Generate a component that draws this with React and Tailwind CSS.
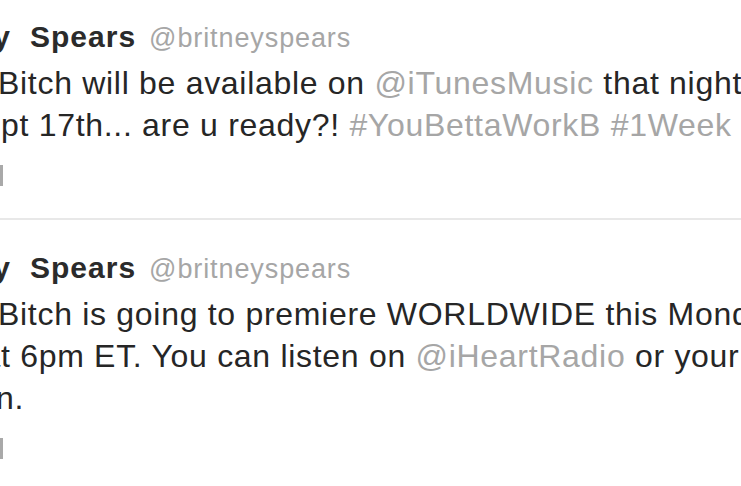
import React from "react";

const LINK = "text-[#a6a6a6]";

// a run of text that starts left of the crop; `pre` overflows to the left of the visible part
const Line = ({ pre, className = "", children }) => (
  <div className={`flex whitespace-nowrap ${className}`}>
    <span className="flex w-0 shrink-0 justify-end">
      <span>{pre}</span>
    </span>
    <span>{children}</span>
  </div>
);

const Header = () => (
  <div className="flex items-baseline whitespace-nowrap leading-[40px] pl-[11px]">
    <span className="flex w-0 shrink-0 justify-end text-[30px] font-bold tracking-[1px] text-[#2b2b2b]">
      <span>Britney</span>
    </span>
    <span className="ml-[19px] text-[30px] font-bold tracking-[1px] text-[#2b2b2b]">
      Spears
    </span>
    <span className={`ml-[13px] text-[27px] tracking-[0.9px] ${LINK}`}>
      @britneyspears
    </span>
  </div>
);

const Tweet = ({ lines, className }) => (
  <div className={className}>
    <Header />
    <div className="mt-[4px] text-[32px] leading-[42px] tracking-[0.7px] text-[#262626]">
      {lines}
    </div>
    <div className="mt-[19px] h-[21px] w-[3px] bg-[#a9a9a9]" />
  </div>
);

export default function App() {
  return (
    <div className="h-[486px] w-[741px] overflow-hidden bg-white font-['Liberation_Sans',Arial,sans-serif]">
      <Tweet
        className="pt-[17px] pb-[32px] border-b-2 border-[#e8e8e8]"
        lines={
          <>
            <Line pre="Work " className="-ml-[2px]">
              Bitch will be available on <span className={LINK}>@iTunesMusic</span> that night,
            </Line>
            <Line pre="Se" className="pl-[1px]">
              pt 17th... are u ready?! <span className={LINK}>#YouBettaWorkB #1Week</span>
            </Line>
          </>
        }
      />
      <Tweet
        className="pt-[28px]"
        lines={
          <>
            <Line pre="Work " className="-ml-[2px]">
              Bitch is going to premiere WORLDWIDE this Monday
            </Line>
            <Line pre="a" className="pl-[1px]">
              t 6pm ET. You can listen on <span className={LINK}>@iHeartRadio</span> or your local
            </Line>
            <Line pre="statio" className="-ml-[4px]">
              n.
            </Line>
          </>
        }
      />
    </div>
  );
}
